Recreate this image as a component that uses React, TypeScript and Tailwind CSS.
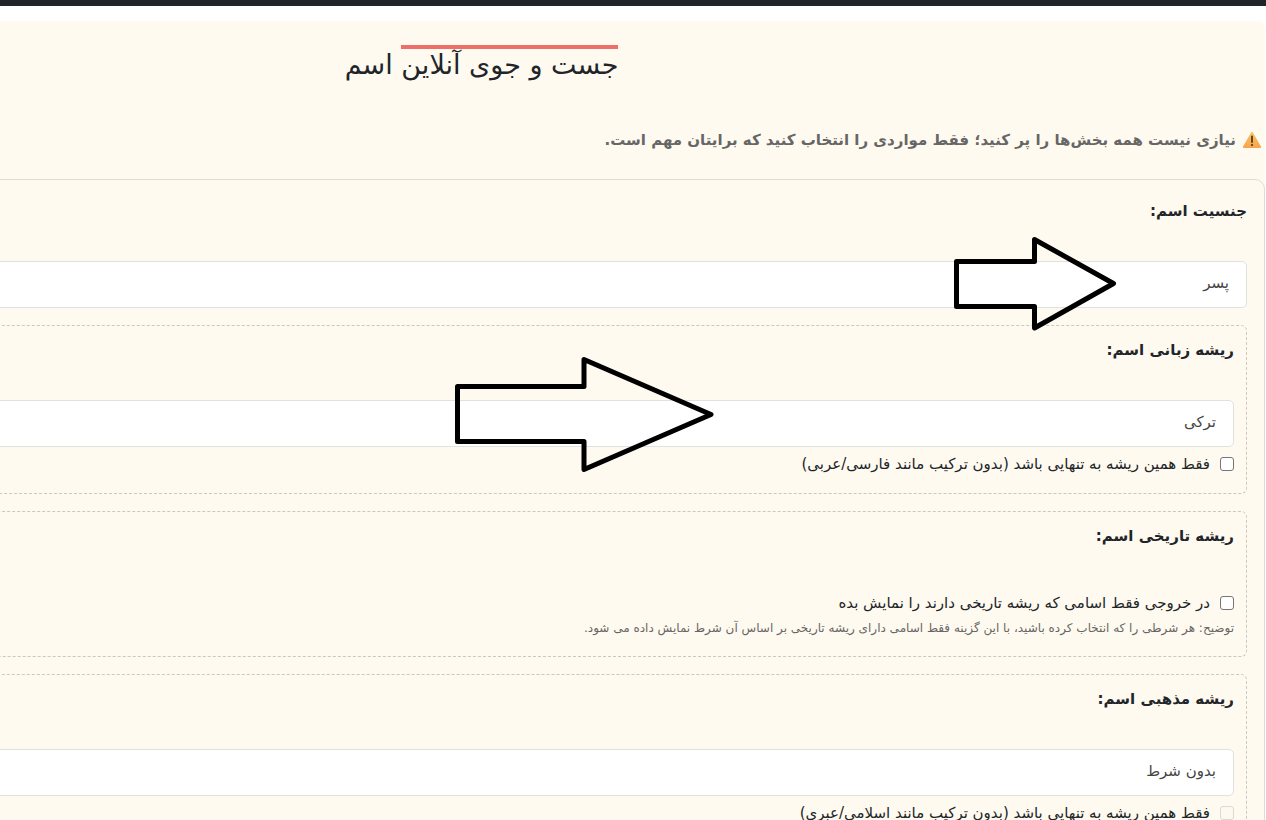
import { type ReactNode, useId } from "react";

interface SelectFieldProps {
	label: string;
	options: string[];
}

interface CheckFieldProps {
	label: string;
	disabled?: boolean;
}

function FieldTitle({ htmlFor, children }: { htmlFor?: string; children: ReactNode }) {
	return (
		<label htmlFor={htmlFor} className="mb-[38px] block text-[15px] leading-6 font-bold text-[#212529]">
			{children}
		</label>
	);
}

function SelectField({ label, options }: SelectFieldProps) {
	const id = useId();

	return (
		<div>
			<FieldTitle htmlFor={id}>{label}</FieldTitle>
			<select
				id={id}
				className="block h-[47px] w-full appearance-none rounded-[5px] border border-[#e1e1e1] bg-white px-[17px] pb-0.5 text-[15px] text-[#444]"
			>
				{options.map((option) => (
					<option key={option}>{option}</option>
				))}
			</select>
		</div>
	);
}

function CheckField({ label, disabled = false }: CheckFieldProps) {
	return (
		<label className="flex items-center gap-2.5 py-[5px] text-[15px] leading-6 text-[#212529]">
			<input
				type="checkbox"
				disabled={disabled}
				className="size-3.5 shrink-0 appearance-none rounded-[3px] border border-[#767676] bg-white checked:bg-[#0075ff] disabled:border-[#dcd9d0] disabled:bg-[#fdf9f0]"
			/>
			{label}
		</label>
	);
}

function Group({ children }: { children: ReactNode }) {
	return <div className="rounded-[6px] border border-dashed border-[#ccc8bd] p-3">{children}</div>;
}

function WarningIcon() {
	return (
		<svg viewBox="0 0 20 18" className="h-[18px] w-5 shrink-0" aria-hidden="true">
			<defs>
				<linearGradient id="warning" x1="0" y1="0" x2="0" y2="1">
					<stop offset="0" stopColor="#f8c65c" />
					<stop offset="1" stopColor="#fba24b" />
				</linearGradient>
			</defs>
			<path d="M9.1 1.4Q10 .2 10.9 1.4L18.9 15.4Q19.4 17 18 17H2Q.6 17 1.1 15.4Z" fill="url(#warning)" />
			<path d="M10 5.5V11" stroke="#4a3b32" strokeWidth="1.8" strokeLinecap="round" />
			<circle cx="10" cy="14" r="1.1" fill="#4a3b32" />
		</svg>
	);
}

// Hand-drawn pointers laid over the form, anchored to its right edge
function Pointers() {
	return (
		<svg
			viewBox="0 0 826 500"
			className="pointer-events-none absolute top-0 right-0 h-[500px] w-[826px]"
			fill="none"
			stroke="#000"
			strokeWidth="5"
			strokeLinejoin="round"
			aria-hidden="true"
		>
			<path d="M516.5 261.5H594.5V239.5L673.5 283.5L594.5 328V306.5H516.5Z" />
			<path d="M17.5 386.5H144V359.5L271 414.5L144 469.5V441.5H17.5Z" />
		</svg>
	);
}

export default function App() {
	return (
		<div
			dir="rtl"
			className="relative h-screen overflow-hidden bg-white font-['DejaVu_Sans',sans-serif] text-[#212529]"
		>
			<header className="h-1.5 bg-[#212529]" />

			{/* The page is wider than the window and runs off its left side */}
			<main className="mt-[15px] mr-px -ml-[302px] rounded-tr-[8px] bg-[#fffaef] pt-6 pb-6">
				<h1 className="text-center text-[27px] leading-8 font-normal">
					<span className="inline-block border-t-4 border-[#ee6e6a]">جست و جوی آنلاین</span> اسم
				</h1>

				<p className="mt-[45px] flex items-center gap-1.5 px-[3px] text-[15px] leading-7 font-bold text-[#666]">
					<WarningIcon />
					نیازی نیست همه بخش‌ها را پر کنید؛ فقط مواردی را انتخاب کنید که برایتان مهم است.
				</p>

				<form className="mt-[25px] flex flex-col gap-[17px] rounded-[10px] border border-[#dedcd4] p-[17px] pt-[19px]">
					<SelectField label="جنسیت اسم:" options={["پسر", "دختر"]} />

					<Group>
						<SelectField label="ریشه زبانی اسم:" options={["ترکی", "فارسی", "عربی"]} />
						<CheckField label="فقط همین ریشه به تنهایی باشد (بدون ترکیب مانند فارسی/عربی)" />
					</Group>

					<Group>
						<FieldTitle>ریشه تاریخی اسم:</FieldTitle>
						<CheckField label="در خروجی فقط اسامی که ریشه تاریخی دارند را نمایش بده" />
						<p className="pb-2 text-[12px] leading-4 text-[#666]">
							توضیح: هر شرطی را که انتخاب کرده باشید، با این گزینه فقط اسامی دارای ریشه تاریخی بر اساس آن شرط نمایش داده می شود.
						</p>
					</Group>

					<Group>
						<SelectField label="ریشه مذهبی اسم:" options={["بدون شرط"]} />
						<CheckField label="فقط همین ریشه به تنهایی باشد (بدون ترکیب مانند اسلامی/عبری)" disabled />
					</Group>
				</form>
			</main>

			<Pointers />
		</div>
	);
}
